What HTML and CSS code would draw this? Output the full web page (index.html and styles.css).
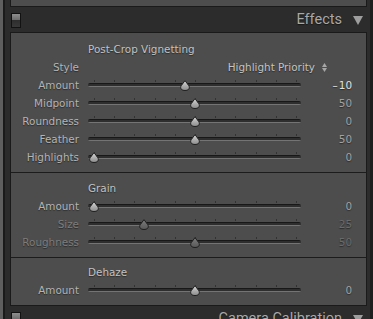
FILE: index.html
```html
<!DOCTYPE html>
<html lang="en">
<head>
  <meta charset="UTF-8" />
  <meta name="viewport" content="width=device-width, initial-scale=1.0"/>
  <title>Effects</title>
  <link rel="stylesheet" href="styles.css">
</head>
<body>
  <!-- shared shapes for the slider knobs -->
  <svg class="defs" aria-hidden="true">
    <defs>
      <linearGradient id="knobFill" x1="0" y1="0" x2="0" y2="1">
        <stop offset="0" stop-color="#dadada"/>
        <stop offset="0.55" stop-color="#acacac"/>
        <stop offset="1" stop-color="#8c8c8c"/>
      </linearGradient>
      <linearGradient id="knobDim" x1="0" y1="0" x2="0" y2="1">
        <stop offset="0" stop-color="#7c7c7c"/>
        <stop offset="1" stop-color="#585858"/>
      </linearGradient>
      <symbol id="knob" viewBox="0 0 10 11">
        <path d="M5 0.6 L8.7 5.6 C9.6 6.8 9.5 8.4 8.6 9.3 C7.8 10.2 6.6 10.5 5 10.5 C3.4 10.5 2.2 10.2 1.4 9.3 C0.5 8.4 0.4 6.8 1.3 5.6 Z"/>
      </symbol>
    </defs>
  </svg>

  <div class="sidebar">
    <div class="rail"></div>

    <div class="panels">
      <div class="panel panel-tail"></div>

      <!-- ===== Effects header ===== -->
      <div class="panel-head">
        <span class="switch"></span>
        <span class="panel-title">Effects</span>
        <svg class="caret" viewBox="0 0 10 9"><path d="M0 0 H10 L5 9 Z"/></svg>
      </div>

      <div class="panel">
        <!-- Post-Crop Vignetting -->
        <div class="section section-vignette">
          <div class="row">
            <span class="label"></span>
            <span class="group-title">Post-Crop Vignetting</span>
          </div>
          <div class="row">
            <span class="label">Style</span>
            <span class="popup">
              Highlight Priority
              <svg class="popup-arrows" viewBox="0 0 5 9"><path d="M0 4 L2.5 0 L5 4 Z M0 5 H5 L2.5 9 Z"/></svg>
            </span>
          </div>
          <div class="row">
            <span class="label">Amount</span>
            <div class="slider">
              <div class="ticks"></div>
              <div class="track"></div>
              <svg class="thumb" style="left: 92px"><use href="#knob"/></svg>
            </div>
            <span class="value value-set">&ndash;&#8202;10</span>
          </div>
          <div class="row">
            <span class="label">Midpoint</span>
            <div class="slider">
              <div class="ticks"></div>
              <div class="track"></div>
              <svg class="thumb" style="left: 102px"><use href="#knob"/></svg>
            </div>
            <span class="value">50</span>
          </div>
          <div class="row">
            <span class="label">Roundness</span>
            <div class="slider">
              <div class="ticks"></div>
              <div class="track"></div>
              <svg class="thumb" style="left: 102px"><use href="#knob"/></svg>
            </div>
            <span class="value">0</span>
          </div>
          <div class="row">
            <span class="label">Feather</span>
            <div class="slider">
              <div class="ticks"></div>
              <div class="track"></div>
              <svg class="thumb" style="left: 102px"><use href="#knob"/></svg>
            </div>
            <span class="value">50</span>
          </div>
          <div class="row">
            <span class="label">Highlights</span>
            <div class="slider">
              <div class="ticks"></div>
              <div class="track"></div>
              <svg class="thumb" style="left: 1px"><use href="#knob"/></svg>
            </div>
            <span class="value">0</span>
          </div>
        </div>

        <!-- Grain -->
        <div class="section section-grain">
          <div class="row">
            <span class="label"></span>
            <span class="group-title">Grain</span>
          </div>
          <div class="row">
            <span class="label">Amount</span>
            <div class="slider">
              <div class="ticks"></div>
              <div class="track"></div>
              <svg class="thumb" style="left: 1px"><use href="#knob"/></svg>
            </div>
            <span class="value">0</span>
          </div>
          <div class="row row-off">
            <span class="label">Size</span>
            <div class="slider">
              <div class="ticks"></div>
              <div class="track"></div>
              <svg class="thumb" style="left: 51px"><use href="#knob"/></svg>
            </div>
            <span class="value">25</span>
          </div>
          <div class="row row-off">
            <span class="label">Roughness</span>
            <div class="slider">
              <div class="ticks"></div>
              <div class="track"></div>
              <svg class="thumb" style="left: 102px"><use href="#knob"/></svg>
            </div>
            <span class="value">50</span>
          </div>
        </div>

        <!-- Dehaze -->
        <div class="section section-dehaze">
          <div class="row">
            <span class="label"></span>
            <span class="group-title">Dehaze</span>
          </div>
          <div class="row">
            <span class="label">Amount</span>
            <div class="slider">
              <div class="ticks"></div>
              <div class="track"></div>
              <svg class="thumb" style="left: 102px"><use href="#knob"/></svg>
            </div>
            <span class="value">0</span>
          </div>
        </div>
      </div>

      <!-- ===== next panel header ===== -->
      <div class="panel-head">
        <span class="switch"></span>
        <span class="panel-title">Camera Calibration</span>
        <svg class="caret" viewBox="0 0 10 9"><path d="M0 0 H10 L5 9 Z"/></svg>
      </div>
    </div>

    <div class="scroll"></div>
  </div>
</body>
</html>
```

FILE: styles.css
```css
/* ===== page ===== */
body {
  margin: 0;
  background: #2c2c2c;
  font-family: "DejaVu Sans", Verdana, sans-serif;
  font-size: 10.4px;
  overflow: hidden;
}

.defs {
  display: block;
  width: 0;
  height: 0;
}

.sidebar {
  display: flex;
  width: 373px;
  height: 319px;
  overflow: hidden;
}

/* left edge of the window */
.rail {
  flex: none;
  width: 3px;
  background: #5f5f5f;
  border-right: 2px solid #1b1b1b;
}

.panels {
  flex: 1;
  padding: 0 3px 0 5px;
}

/* right edge */
.scroll {
  flex: none;
  width: 3px;
  background: #1e1e1e;
}

/* ===== panel boxes ===== */
.panel {
  background: #4d4d4d;
  border: 1px solid #1a1a1a;
}

.panel-tail {
  height: 6px;
  border-top: none;
}

.panel-head {
  display: flex;
  align-items: center;
  height: 25px;
  padding: 0 4px 0 1px;
}

/* on/off switch at the left of a header */
.switch {
  width: 8px;
  height: 13px;
  margin-top: 2px;
  border: 1px solid #121212;
  background: linear-gradient(#8e8e8e, #6c6c6c 46%, #2e2e2e 50%, #383838);
}

.panel-title {
  margin-left: auto;
  margin-right: 11px;
  font-family: Roboto, "Liberation Sans", sans-serif;
  font-size: 14.5px;
  color: #a8a8a8;
  text-shadow: 0 1px 1px rgba(0, 0, 0, 0.5);
}

.caret {
  width: 10px;
  height: 9px;
  margin-top: 2px;
  fill: #9e9e9e;
}

/* ===== sections ===== */
.section {
  padding: 7px 14px 6px 0;
}

.section + .section {
  border-top: 1px solid #1c1c1c;
}

.section-grain {
  padding-top: 6px;
}

.section-dehaze {
  padding-top: 5px;
}

.row {
  display: flex;
  align-items: center;
  height: 18px;
  text-shadow: 0 1px 1px rgba(0, 0, 0, 0.45);
}

.label {
  flex: none;
  width: 68px;
  margin-right: 9px;
  text-align: right;
  color: #b4b4b4;
}

.group-title {
  color: #c2c2c2;
}

.popup {
  flex: 1;
  display: flex;
  align-items: center;
  justify-content: flex-end;
  margin-right: 25px;
  color: #c4c4c4;
}

.popup-arrows {
  width: 5px;
  height: 9px;
  margin-left: 7px;
  fill: #a6a6a6;
}

/* ===== sliders ===== */
.slider {
  flex: none;
  position: relative;
  width: 213px;
  height: 18px;
}

.ticks {
  width: 203px;
  height: 2px;
  margin: 4px 0 0 6px;
  background: repeating-linear-gradient(90deg, #333 0 1px, transparent 1px 20.2px);
}

.track {
  height: 4px;
  margin-top: 1px;
  border-radius: 2px;
  background: linear-gradient(#181818 0 1px, #2e2e2e 1px 3px, #747474 3px);
}

/* knob sits on top of the track */
.thumb {
  position: absolute;
  top: 4px;
  width: 10px;
  height: 11px;
  fill: url(#knobFill);
  stroke: #1e1e1e;
  stroke-width: 1;
}

.value {
  flex: none;
  width: 51px;
  text-align: right;
  color: #a2a2a2;
}

.value-set {
  color: #e2e2e2;
}

/* disabled rows */
.row-off .label {
  color: #7c7c7c;
}

.row-off .value {
  color: #6a6a6a;
}

.row-off .thumb {
  fill: url(#knobDim);
}
```
